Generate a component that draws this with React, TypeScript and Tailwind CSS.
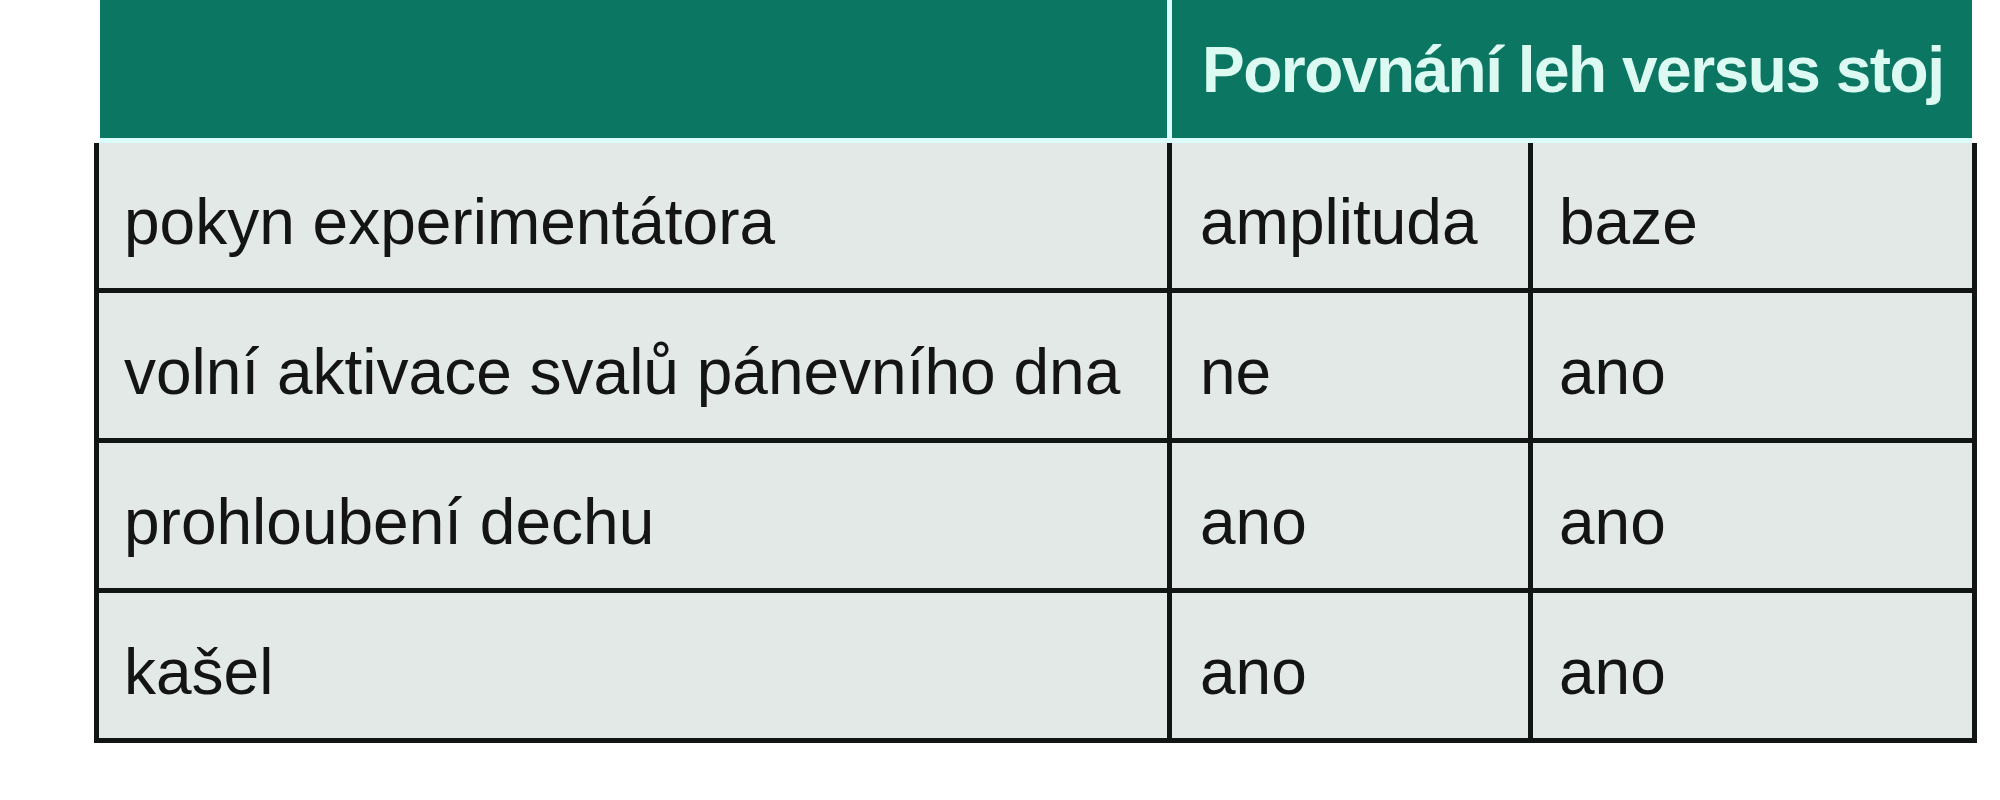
const rows = [
  { label: "pokyn experimentátora", a: "amplituda", b: "baze" },
  { label: "volní aktivace svalů pánevního dna", a: "ne", b: "ano" },
  { label: "prohloubení dechu", a: "ano", b: "ano" },
  { label: "kašel", a: "ano", b: "ano" },
]

export default function App() {
  return (
    <div className="w-[2000px] h-[800px] bg-white font-['Liberation_Sans',Arial,sans-serif]">
      {/* header band */}
      <div className="ml-[100px] flex h-[138px] w-[1872px]">
        <div className="w-[1067px] bg-[#0b7763]" />
        <div className="w-[5px] bg-[#dcfcfb]" />
        <div className="flex flex-1 items-center bg-[#0b7763] pl-[30px] pt-[2px]">
          <span className="text-[64px] font-bold tracking-[-1.5px] text-[#dcfaf2] leading-none whitespace-nowrap">
            Porovnání leh versus stoj
          </span>
        </div>
      </div>
      <div className="ml-[100px] h-[5px] w-[1872px] bg-[#dcfcfb]" />

      {/* body */}
      <div className="ml-[94px] w-[1883px] border-x-[5px] border-b-[5px] border-[#111614] bg-[#e2e9e6]">
        {rows.map((row, i) => (
          <div
            key={row.label}
            className={
              i < rows.length - 1
                ? "flex h-[150px] border-b-[5px] border-[#111614] text-[64px] text-[#141414]"
                : "flex h-[145px] text-[64px] text-[#141414]"
            }
          >
            <div className="flex w-[1068px] items-center pl-[25px] pt-[12px] whitespace-nowrap">{row.label}</div>
            <div className="flex w-[361px] items-center border-l-[5px] border-[#111614] pl-[28px] pt-[12px]">
              {row.a}
            </div>
            <div className="flex flex-1 items-center border-l-[5px] border-[#111614] pl-[26px] pt-[12px]">
              {row.b}
            </div>
          </div>
        ))}
      </div>
    </div>
  )
}
